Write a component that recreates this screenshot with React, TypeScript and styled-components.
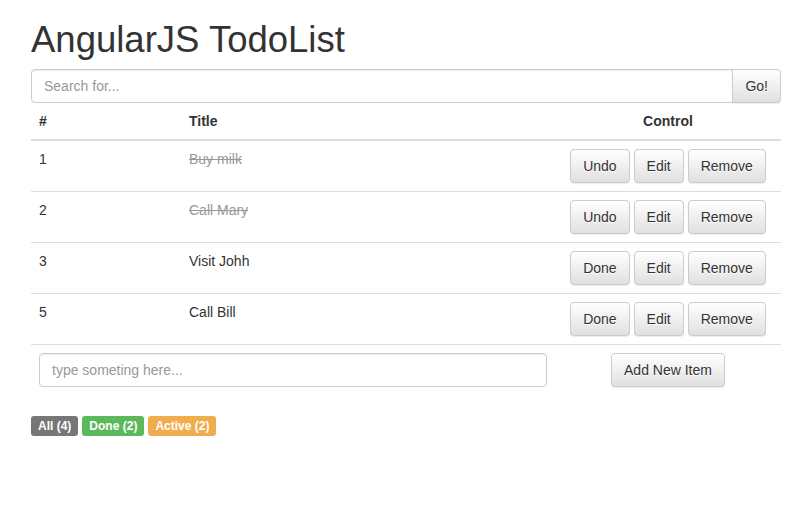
import React, { useState } from 'react'
import styled, { createGlobalStyle } from 'styled-components'

interface Todo {
  id: number,
  title: string,
  done: boolean,
}

const INITIAL_TODOS: Todo[] = [
  { id: 1, title: 'Buy milk', done: true },
  { id: 2, title: 'Call Mary', done: true },
  { id: 3, title: 'Visit Johh', done: false },
  { id: 5, title: 'Call Bill', done: false },
]

const GlobalStyle = createGlobalStyle`
  html, body {
    margin: 0;
    background: #fff;
  }
  body {
    font-family: "Liberation Sans", Arial, sans-serif;
    font-size: 14px;
    line-height: 20px;
    color: #333;
  }
  * {
    box-sizing: border-box;
  }
`

type LabelKind = 'default' | 'success' | 'warning'

const LABEL_COLORS: Record<LabelKind, string> = {
  default: '#777777',
  success: '#5cb85c',
  warning: '#f0ad4e',
}

export default function App() {
  const [todos] = useState(INITIAL_TODOS)
  const doneCount = todos.filter(t => t.done).length

  return (
    <Container>
      <GlobalStyle />
      <Heading>AngularJS TodoList</Heading>

      <InputGroup>
        <SearchInput placeholder="Search for..." />
        <GoButton>Go!</GoButton>
      </InputGroup>

      <Table>
        <colgroup>
          <Col $size={150} />
          <Col $size={374} />
          <Col $size={226} />
        </colgroup>
        <thead>
          <tr>
            <HeadCell>#</HeadCell>
            <HeadCell>Title</HeadCell>
            <HeadCell center>Control</HeadCell>
          </tr>
        </thead>
        <tbody>
          {todos.map(todo => (
            <tr key={todo.id}>
              <Cell>{todo.id}</Cell>
              <Cell>
                <TitleText done={todo.done}>{todo.title}</TitleText>
              </Cell>
              <ControlCell>
                <Button>{todo.done ? 'Undo' : 'Done'}</Button>
                <Button>Edit</Button>
                <Button>Remove</Button>
              </ControlCell>
            </tr>
          ))}
          <tr>
            <Cell colSpan={2}>
              <NewItemInput placeholder="type someting here..." />
            </Cell>
            <ControlCell>
              <Button>Add New Item</Button>
            </ControlCell>
          </tr>
        </tbody>
      </Table>

      <Labels>
        <Label kind="default">All ({todos.length})</Label>
        <Label kind="success">Done ({doneCount})</Label>
        <Label kind="warning">Active ({todos.length - doneCount})</Label>
      </Labels>
    </Container>
  )
}

//#region Styled components
const Container = styled.div`
  width: 750px;
  margin-left: 31px;
`

const Heading = styled.h1`
  margin: 20px 0 9px;
  font-size: 36.5px;
  font-weight: 500;
  line-height: 39.6px;
  color: #333;
`

const InputGroup = styled.div`
  display: flex;
  height: 34px;
`

const baseInput = `
  height: 34px;
  padding: 6px 12px;
  font-family: "Liberation Sans", Arial, sans-serif;
  font-size: 14px;
  line-height: 20px;
  color: #555;
  background: #fff;
  border: 1px solid #ccc;
  box-shadow: inset 0 1px 1px rgba(0, 0, 0, .075);
  outline: none;
  &::placeholder {
    color: #999;
  }
`

const SearchInput = styled.input`
  ${baseInput}
  flex: 1;
  border-radius: 4px 0 0 4px;
`

const NewItemInput = styled.input`
  ${baseInput}
  display: block;
  width: 100%;
  border-radius: 4px;
`

const Button = styled.button`
  display: inline-block;
  height: 34px;
  padding: 6px 12px;
  margin: 0 2px;
  font-family: "Liberation Sans", Arial, sans-serif;
  font-size: 14px;
  line-height: 20px;
  color: #333;
  text-shadow: 0 1px 0 #fff;
  background-image: linear-gradient(to bottom, #fff 0, #e0e0e0 100%);
  border: 1px solid #ccc;
  border-radius: 4px;
  box-shadow: inset 0 1px 0 rgba(255, 255, 255, .15), 0 1px 1px rgba(0, 0, 0, .075);
  cursor: pointer;
`

const GoButton = styled(Button)`
  margin: 0 0 0 -1px;
  border-radius: 0 4px 4px 0;
`

const Table = styled.table`
  width: 100%;
  table-layout: fixed;
  border-collapse: collapse;
  border-spacing: 0;
  margin-bottom: 21px;
`

const Col = styled.col<{ $size: number }>`
  width: ${props => props.$size}px;
`

interface HeadCellProps {
  center?: boolean,
}

const HeadCell = styled.th<HeadCellProps>`
  padding: 8px;
  line-height: 20px;
  font-weight: bold;
  text-align: ${props => props.center ? 'center' : 'left'};
  vertical-align: bottom;
  border-bottom: 2px solid #ddd;
`

const Cell = styled.td`
  padding: 8px;
  line-height: 20px;
  vertical-align: top;
  border-top: 1px solid #ddd;
`

const ControlCell = styled(Cell)`
  text-align: center;
  white-space: nowrap;
`

const TitleText = styled.span<{ done: boolean }>`
  color: ${props => props.done ? '#999' : '#333'};
  text-decoration: ${props => props.done ? 'line-through' : 'none'};
`

const Labels = styled.div`
  display: flex;
  gap: 4px;
`

const Label = styled.span<{ kind: LabelKind }>`
  display: inline-block;
  padding: 4px 7px;
  font-size: 12px;
  font-weight: bold;
  line-height: 12px;
  color: #fff;
  white-space: nowrap;
  background-color: ${props => LABEL_COLORS[props.kind]};
  border-radius: 3px;
`
//#endregion
